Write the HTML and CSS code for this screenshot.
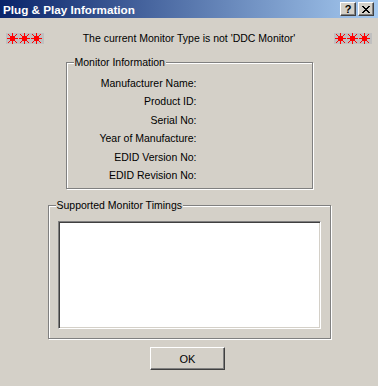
FILE: index.html
```html
<!DOCTYPE html>
<html lang="en">

<head>
	<meta charset="UTF-8">
	<title>Plug &amp; Play Information</title>
	<link rel="stylesheet" href="styles.css">
</head>

<body>
	<div class="dialog">
		<div class="titlebar">
			<span class="title">Plug &amp; Play Information</span>
			<div class="caption-buttons">
				<button class="cap-btn help">?</button>
				<button class="cap-btn close">
					<svg width="8" height="7" viewBox="0 0 8 7" shape-rendering="crispEdges">
						<path d="M0 0h2v1h-2zM6 0h2v1h-2zM1 1h2v1h-2zM5 1h2v1h-2zM2 2h4v1h-4zM3 3h2v1h-2zM2 4h4v1h-4zM1 5h2v1h-2zM5 5h2v1h-2zM0 6h2v1h-2zM6 6h2v1h-2z" fill="#000"/>
					</svg>
				</button>
			</div>
		</div>

		<div class="warning">
			<span class="stars">
				<svg width="38" height="11" viewBox="0 0 38 11" shape-rendering="crispEdges">
					<g stroke="#ff0000" stroke-width="1">
						<path d="M1 5.5h11M6.5 0v11M2 1l9 9M11 1l-9 9"/>
						<path d="M13 5.5h11M18.5 0v11M14 1l9 9M23 1l-9 9"/>
						<path d="M25 5.5h11M30.5 0v11M26 1l9 9M35 1l-9 9"/>
					</g>
					<g fill="#ff0000">
						<rect x="4" y="3" width="5" height="5"/>
						<rect x="16" y="3" width="5" height="5"/>
						<rect x="28" y="3" width="5" height="5"/>
					</g>
				</svg>
			</span>
			<span class="warning-text">The current Monitor Type is not 'DDC Monitor'</span>
			<span class="stars">
				<svg width="38" height="11" viewBox="0 0 38 11" shape-rendering="crispEdges">
					<g stroke="#ff0000" stroke-width="1">
						<path d="M1 5.5h11M6.5 0v11M2 1l9 9M11 1l-9 9"/>
						<path d="M13 5.5h11M18.5 0v11M14 1l9 9M23 1l-9 9"/>
						<path d="M25 5.5h11M30.5 0v11M26 1l9 9M35 1l-9 9"/>
					</g>
					<g fill="#ff0000">
						<rect x="4" y="3" width="5" height="5"/>
						<rect x="16" y="3" width="5" height="5"/>
						<rect x="28" y="3" width="5" height="5"/>
					</g>
				</svg>
			</span>
		</div>

		<div class="group group-info">
			<div class="legend">Monitor Information</div>
			<ul class="fields">
				<li>Manufacturer Name:</li>
				<li>Product ID:</li>
				<li>Serial No:</li>
				<li>Year of Manufacture:</li>
				<li>EDID Version No:</li>
				<li>EDID Revision No:</li>
			</ul>
		</div>

		<div class="group group-timings">
			<div class="legend">Supported Monitor Timings</div>
			<div class="listbox"></div>
		</div>

		<div class="actions">
			<button class="btn">OK</button>
		</div>
	</div>
</body>

</html>
```

FILE: styles.css
```css
body {
    margin: 0;
    background-color: #D4D0C8;
    font-family: "Liberation Sans", Arial, sans-serif;
    font-size: 10.5px;
    color: #000;
}
.dialog {
    width: 378px;
    height: 386px;
    background-color: #D4D0C8;
    overflow: hidden;
}
.titlebar {
    height: 18px;
    display: flex;
    align-items: center;
    justify-content: space-between;
    padding: 0 4px 0 3px;
    background: linear-gradient(to right, #0A246A, #A6CAF0);
}
.title {
    color: white;
    font-weight: bold;
    font-size: 11.7px;
}
.caption-buttons {
    display: flex;
    gap: 2px;
}
.cap-btn {
    width: 16px;
    height: 14px;
    padding: 0;
    margin: 0;
    display: flex;
    align-items: center;
    justify-content: center;
    background-color: #D4D0C8;
    border: 1px solid;
    border-color: #fff #404040 #404040 #fff;
    box-shadow: inset -1px -1px 0 #808080;
    font-family: "Liberation Sans", Arial, sans-serif;
    font-weight: bold;
    font-size: 11px;
    line-height: 12px;
    color: #000;
}
.warning {
    display: flex;
    align-items: center;
    margin-top: 14px;
    padding: 0 6px;
    height: 12px;
}
.stars {
    width: 38px;
    height: 11px;
    background-color: #C0C0C0;
    display: block;
}
.stars svg {
    display: block;
}
.warning-text {
    flex: 1;
    text-align: center;
    line-height: 12px;
}
.group {
    box-sizing: border-box;
    margin-left: auto;
    margin-right: auto;
    border: 1px solid #808080;
    box-shadow: 1px 1px 0 #fff, inset 1px 1px 0 #fff;
}
.legend {
    display: table;
    margin: -7px 0 0 7px;
    padding: 0 1px;
    line-height: 13px;
    background-color: #D4D0C8;
}
.group-info {
    width: 247px;
    height: 127px;
    margin-top: 18px;
}
.fields {
    list-style: none;
    margin: 0;
    padding: 5px 0 0 0;
    width: 130px;
}
.fields li {
    height: 18.4px;
    line-height: 18.4px;
    text-align: right;
    white-space: nowrap;
}
.group-timings {
    width: 283px;
    height: 134px;
    margin-top: 16px;
}
.listbox {
    box-sizing: border-box;
    width: 263px;
    height: 108px;
    margin: 9px 0 0 9px;
    background-color: white;
    border: 1px solid;
    border-color: #808080 #fff #fff #808080;
    box-shadow: inset 1px 1px 0 #404040, inset -1px -1px 0 #D4D0C8;
}
.actions {
    display: flex;
    justify-content: center;
    margin-top: 8px;
    padding-right: 3px;
}
.btn {
    box-sizing: border-box;
    width: 75px;
    height: 23px;
    padding: 0;
    background-color: #D4D0C8;
    border: 1px solid;
    border-color: #fff #404040 #404040 #fff;
    box-shadow: inset -1px -1px 0 #808080;
    font-family: "Liberation Sans", Arial, sans-serif;
    font-size: 11px;
    color: #000;
}
```
